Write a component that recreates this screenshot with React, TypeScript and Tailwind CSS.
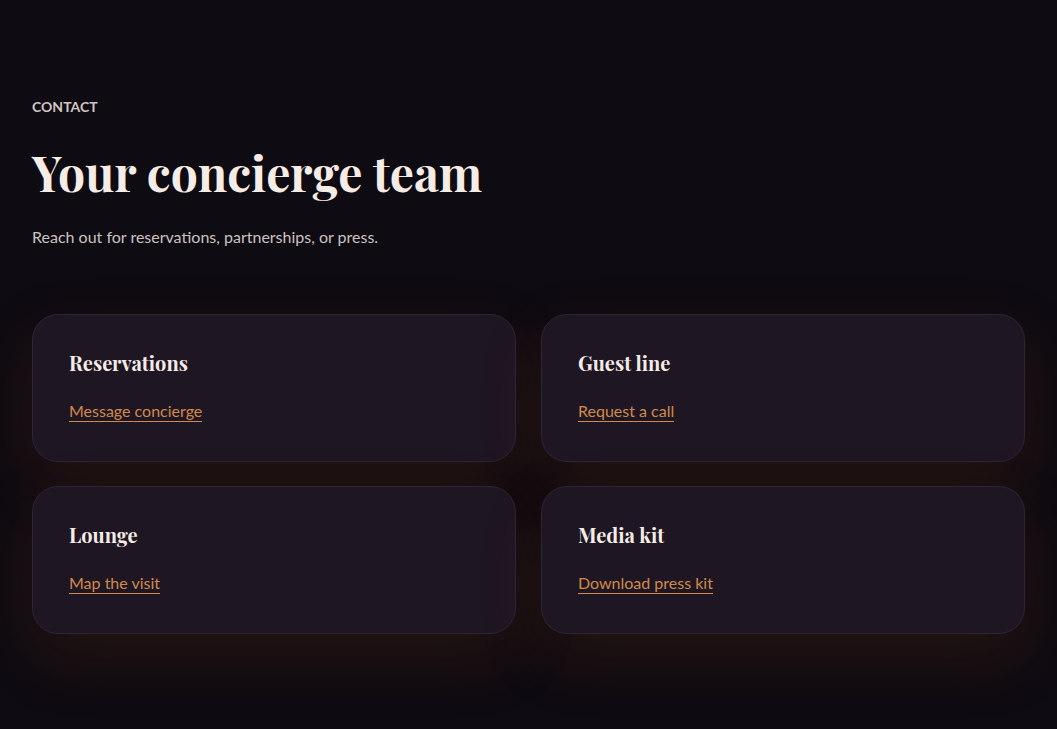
const cards = [
  { title: "Reservations", link: "Message concierge" },
  { title: "Guest line", link: "Request a call" },
  { title: "Lounge", link: "Map the visit" },
  { title: "Media kit", link: "Download press kit" },
];

const serif = "font-['Playfair_Display','DejaVu_Serif','Liberation_Serif',serif]";

export default function App() {
  return (
    <div className="min-h-[729px] bg-[#0f0b12] font-['Lato','Noto_Sans',sans-serif]">
      <section className="px-8 pt-[96px] pb-24">
        <p className="text-[14px] font-bold uppercase text-[#cfc6c4]">Contact</p>
        <h1 className={`${serif} mt-[29px] text-[48px] font-bold leading-[1.1] text-[#f6ece6]`}>
          Your concierge team
        </h1>
        <p className="mt-[26px] text-[16px] text-[#cbc2c0]">
          Reach out for reservations, partnerships, or press.
        </p>

        <div className="mt-[65px] grid grid-cols-2 gap-x-[25px] gap-y-[24px]">
          {cards.map((c) => (
            <div
              key={c.title}
              className="h-[148px] rounded-[26px] border border-[#2e2534] bg-[#1f1623] px-9 pt-[34px] shadow-[0_24px_60px_rgba(110,55,20,0.22)]"
            >
              <h3 className={`${serif} text-[20px] font-bold leading-[1.4] text-[#f6ece6]`}>
                {c.title}
              </h3>
              <a
                href="#"
                className="mt-[23px] inline-block border-b border-[#d08a4a] text-[16px] leading-[1.35] text-[#d08a4a]"
              >
                {c.link}
              </a>
            </div>
          ))}
        </div>
      </section>
    </div>
  );
}
